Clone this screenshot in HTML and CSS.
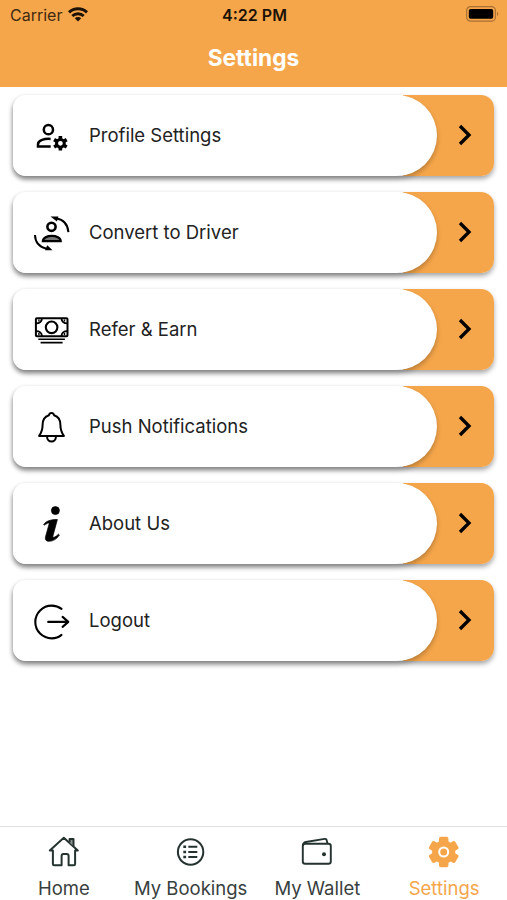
FILE: index.html
```html
<!DOCTYPE html>
<html lang="en">
<head>
    <meta charset="UTF-8">
    <meta name="viewport" content="width=device-width, initial-scale=1.0">
    <title>Settings</title>
    <link rel="stylesheet" href="styles.css">
</head>
<body>
    <header class="header">
        <div class="status-bar">
            <div class="carrier">
                <span>Carrier</span>
                <svg class="wifi" width="20" height="15" viewBox="0 0 20 15" fill="none" stroke="#1c1206" stroke-width="2.9">
                    <path d="M1 5.4a13 13 0 0 1 18 0"/>
                    <path d="M4.3 9a8.2 8.2 0 0 1 11.4 0"/>
                    <path d="M10 14.6l-3.2-3.3a4.6 4.6 0 0 1 6.4 0z" fill="#1c1206" stroke="none"/>
                </svg>
            </div>
            <span class="time">4:22 PM</span>
            <svg class="battery" width="33" height="16" viewBox="0 0 33 16">
                <rect x=".6" y=".6" width="28.8" height="14.6" rx="4" fill="none" stroke="#a97233" stroke-width="1.2"/>
                <rect x="2.8" y="3" width="24.4" height="9.8" rx="1.8"/>
                <path d="M31 5.8q2.6 2.2 0 4.4z" fill="#a97233"/>
            </svg>
        </div>
        <h1 class="title">Settings</h1>
    </header>

    <main class="menu">
        <a class="card">
            <span class="card-body">
                <svg class="card-icon" viewBox="0 0 40 40" fill="none" stroke="#000" stroke-width="2.5">
                    <circle cx="17.4" cy="13.7" r="4.6"/>
                    <path d="M19.6 22.9c-6-.5-12.6 1.3-12.6 5.3v2.4h12.7"/>
                    <circle cx="29.4" cy="27.3" r="3.9" stroke-width="3"/>
                    <path d="M29.4 20v3M29.4 31.6v3M23.1 23.65l2.6 1.5M33.1 29.45l2.6 1.5M23.1 30.95l2.6-1.5M33.1 25.15l2.6-1.5" stroke-width="3.6"/>
                </svg>
                <span class="card-label">Profile Settings</span>
            </span>
            <svg class="chevron" viewBox="0 0 14 22"><path d="M2 2l9 9-9 9"/></svg>
        </a>
        <a class="card">
            <span class="card-body">
                <svg class="card-icon" viewBox="0 0 40 40" fill="none" stroke="#000" stroke-width="2">
                    <circle cx="20.5" cy="13.8" r="4.1" stroke-width="2.6"/>
                    <path d="M11.9 28.2c0-7.200 17.8-7.200 17.8 0z" fill="#777" stroke-width="2.300"/>
                    <path d="M25 5.300c7 1.200 11.800 6.200 12.400 13.800"/>
                    <path d="M19.500 3.600l7.900-.1-1.500 5z" fill="#000" stroke="none"/>
                    <path d="M4 22c.2 7.200 4.400 12 11.500 13.700"/>
                    <path d="M21.500 37.200l-7.400.1 2.200-5z" fill="#000" stroke="none"/>
                </svg>
                <span class="card-label">Convert to Driver</span>
            </span>
            <svg class="chevron" viewBox="0 0 14 22"><path d="M2 2l9 9-9 9"/></svg>
        </a>
        <a class="card">
            <span class="card-body">
                <svg class="card-icon" viewBox="0 0 40 40" fill="none" stroke="#000" stroke-width="1.8">
                    <rect x="4.9" y="8.300" width="31.6" height="18" rx="1" stroke-width="2"/>
                    <circle cx="20.6" cy="17.3" r="5.800" stroke-width="2.100"/>
                    <path d="M11 8.300q-.5 5-6 5M30.400 8.300q.5 5 6 5M11 26.200q-.5-5-6-5M30.400 26.200q.5-5 6-5"/>
                    <path d="M7.200 10.500h1.400M32.800 10.500h1.400M7.200 24h1.400M32.800 24h1.400"/>
                    <path d="M7.300 29.300h26.600M9.600 32.600h22" stroke-width="1.600"/>
                </svg>
                <span class="card-label">Refer &amp; Earn</span>
            </span>
            <svg class="chevron" viewBox="0 0 14 22"><path d="M2 2l9 9-9 9"/></svg>
        </a>
        <a class="card">
            <span class="card-body">
                <svg class="card-icon" viewBox="0 0 40 40" fill="none" stroke="#000" stroke-width="2" stroke-linejoin="round">
                    <path d="M20.500 6.100c-1.500 0-2.300.9-2.600 2.200-4.600 1.500-6.300 5-6.300 9.500 0 5.500-.8 7.500-3.500 11.100h24.800c-2.700-3.600-3.500-5.600-3.500-11.100 0-4.500-1.700-8-6.300-9.500-.3-1.300-1.100-2.200-2.600-2.200z"/>
                    <path d="M16 29.300c0 6.900 9 6.900 9 0"/>
                </svg>
                <span class="card-label">Push Notifications</span>
            </span>
            <svg class="chevron" viewBox="0 0 14 22"><path d="M2 2l9 9-9 9"/></svg>
        </a>
        <a class="card">
            <span class="card-body">
                <svg class="card-icon" viewBox="0 0 40 40" stroke="#000" stroke-width=".7" stroke-linejoin="round">
                    <circle cx="24.4" cy="6.600" r="4"/>
                    <path d="M12.600 20.600c2.300-3.500 7-5.200 13.800-5.100l-4.500 16.600c-.5 2.200 2 1.500 5.500-1.900l1 .9c-2.800 4-6.300 6.200-10.300 6.200-3.600 0-4.200-2.200-3.500-4.800l3.400-12.300c.3-1.600-.6-1.600-4.700.9z"/>
                </svg>
                <span class="card-label">About Us</span>
            </span>
            <svg class="chevron" viewBox="0 0 14 22"><path d="M2 2l9 9-9 9"/></svg>
        </a>
        <a class="card">
            <span class="card-body">
                <svg class="card-icon" viewBox="0 0 40 40" fill="none" stroke="#000" stroke-width="2.100" stroke-linecap="round" stroke-linejoin="round">
                    <path d="M30.500 7.900c-2.800-2.200-6-3.300-9.800-3.300a16.200 16.200 0 1 0 0 32.800c3.800 0 7-1.100 9.800-3.500"/>
                    <path d="M17.200 20.900h20M31.600 15.900l5.700 5-5.700 5"/>
                </svg>
                <span class="card-label">Logout</span>
            </span>
            <svg class="chevron" viewBox="0 0 14 22"><path d="M2 2l9 9-9 9"/></svg>
        </a>
    </main>

    <nav class="tab-bar">
        <a class="tab">
            <svg class="tab-icon" viewBox="0 0 32 32" fill="none" stroke="#253330" stroke-width="2" stroke-linejoin="round">
                <path d="M1.800 14.500L15.800 1.800l14 12.700h-2.700V28c0 .9-.4 1.300-1.300 1.300h-5.200V20c0-1.300-.6-1.900-1.900-1.900h-3.200c-1.300 0-1.900.6-1.900 1.900v9.300H6.200c-.9 0-1.300-.4-1.300-1.300V14.500z"/>
                <path d="M21.600 6.500V3h3.900v7" fill="#8d9593"/>
            </svg>
            <span>Home</span>
        </a>
        <a class="tab">
            <svg class="tab-icon" viewBox="0 0 32 32" fill="none" stroke="#253330" stroke-width="2">
                <circle cx="15.600" cy="16" r="12.700"/>
                <path d="M8.300 10.800h2.800M8.300 15.900h2.800M8.300 21h2.800" stroke-width="2.500"/>
                <path d="M13.300 10.800h9M13.300 15.900h9M13.300 21h9"/>
            </svg>
            <span>My Bookings</span>
        </a>
        <a class="tab">
            <svg class="tab-icon" viewBox="0 0 32 32" fill="none" stroke="#253330" stroke-width="1.900" stroke-linejoin="round">
                <rect x="1.800" y="7.800" width="28" height="20" rx="2.300"/>
                <path d="M1.900 10c0-2.500.6-3.500 3-4L23.600 2.900c1.300-.2 2 .3 2.200 1.600l.6 3.200"/>
                <circle cx="23" cy="18.200" r="2" fill="#253330" stroke="none"/>
            </svg>
            <span>My Wallet</span>
        </a>
        <a class="tab active">
            <svg class="tab-icon" viewBox="0 0 32 32">
                <g fill="#f6a64a">
                    <circle cx="15.700" cy="16" r="11.600"/>
                    <rect id="tooth" x="11" y=".8" width="9.400" height="30.400" rx="1.800"/>
                    <use href="#tooth" transform="rotate(60 15.700 16)"/>
                    <use href="#tooth" transform="rotate(120 15.700 16)"/>
                </g>
                <circle cx="15.700" cy="16" r="4.500" fill="none" stroke="#fff" stroke-width="2"/>
            </svg>
            <span>Settings</span>
        </a>
    </nav>
</body>
</html>
```

FILE: styles.css
```css
* {
    box-sizing: border-box;
}
body {
    font-family: Inter, "Liberation Sans", sans-serif;
    margin: 0;
    height: 900px;
    display: flex;
    flex-direction: column;
    overflow: hidden;
    background-color: #fff;
    color: #222;
}
.header {
    height: 87px;
    background-color: #f6a64a;
}
.status-bar {
    display: grid;
    grid-template-columns: 1fr auto 1fr;
    align-items: center;
    height: 30px;
    padding: 0 8px 0 10px;
    font-size: 16px;
    color: #1c1206;
}
.carrier {
    display: flex;
    align-items: center;
    gap: 6px;
    color: #3f2a12;
}
.wifi {
    margin-bottom: 2px;
}
.time {
    font-weight: 600;
}
.battery {
    justify-self: end;
    margin-bottom: 2px;
}
.title {
    margin: 0;
    font-size: 22.7px;
    font-weight: 700;
    line-height: 56px;
    text-align: center;
    color: #fff;
}
.menu {
    flex: 1;
    display: flex;
    flex-direction: column;
    gap: 16px;
    padding: 8px 13px 0;
}
.card {
    display: flex;
    align-items: center;
    height: 81px;
    border-radius: 13px;
    background: linear-gradient(to right, #fff 390px, #f6a64a 390px);
    box-shadow: 0 3px 5px rgba(0, 0, 0, 0.35);
}
.card-body {
    display: flex;
    align-items: center;
    width: 424px;
    height: 81px;
    padding-left: 18px;
    border-radius: 13px 41px 41px 13px;
    background-color: #fff;
    box-shadow: 0 3px 5px rgba(0, 0, 0, 0.25);
}
.card-icon {
    width: 40px;
    height: 40px;
    margin-right: 18px;
}
.card-label {
    padding-bottom: 2px;
    font-size: 18.5px;
}
.chevron {
    width: 14px;
    height: 22px;
    margin-left: 21px;
    margin-bottom: 1px;
    fill: none;
    stroke: #000;
    stroke-width: 3.3;
}
.tab-bar {
    display: grid;
    grid-template-columns: repeat(4, 1fr);
    height: 74px;
    border-top: 1px solid #dedede;
}
.tab {
    display: flex;
    flex-direction: column;
    align-items: center;
    gap: 8px;
    padding: 9px 0 0 1px;
    font-size: 18.5px;
    line-height: 24px;
    white-space: nowrap;
    color: #38403e;
}
.tab-icon {
    width: 32px;
    height: 32px;
}
.active {
    color: #f6a64a;
}
```
